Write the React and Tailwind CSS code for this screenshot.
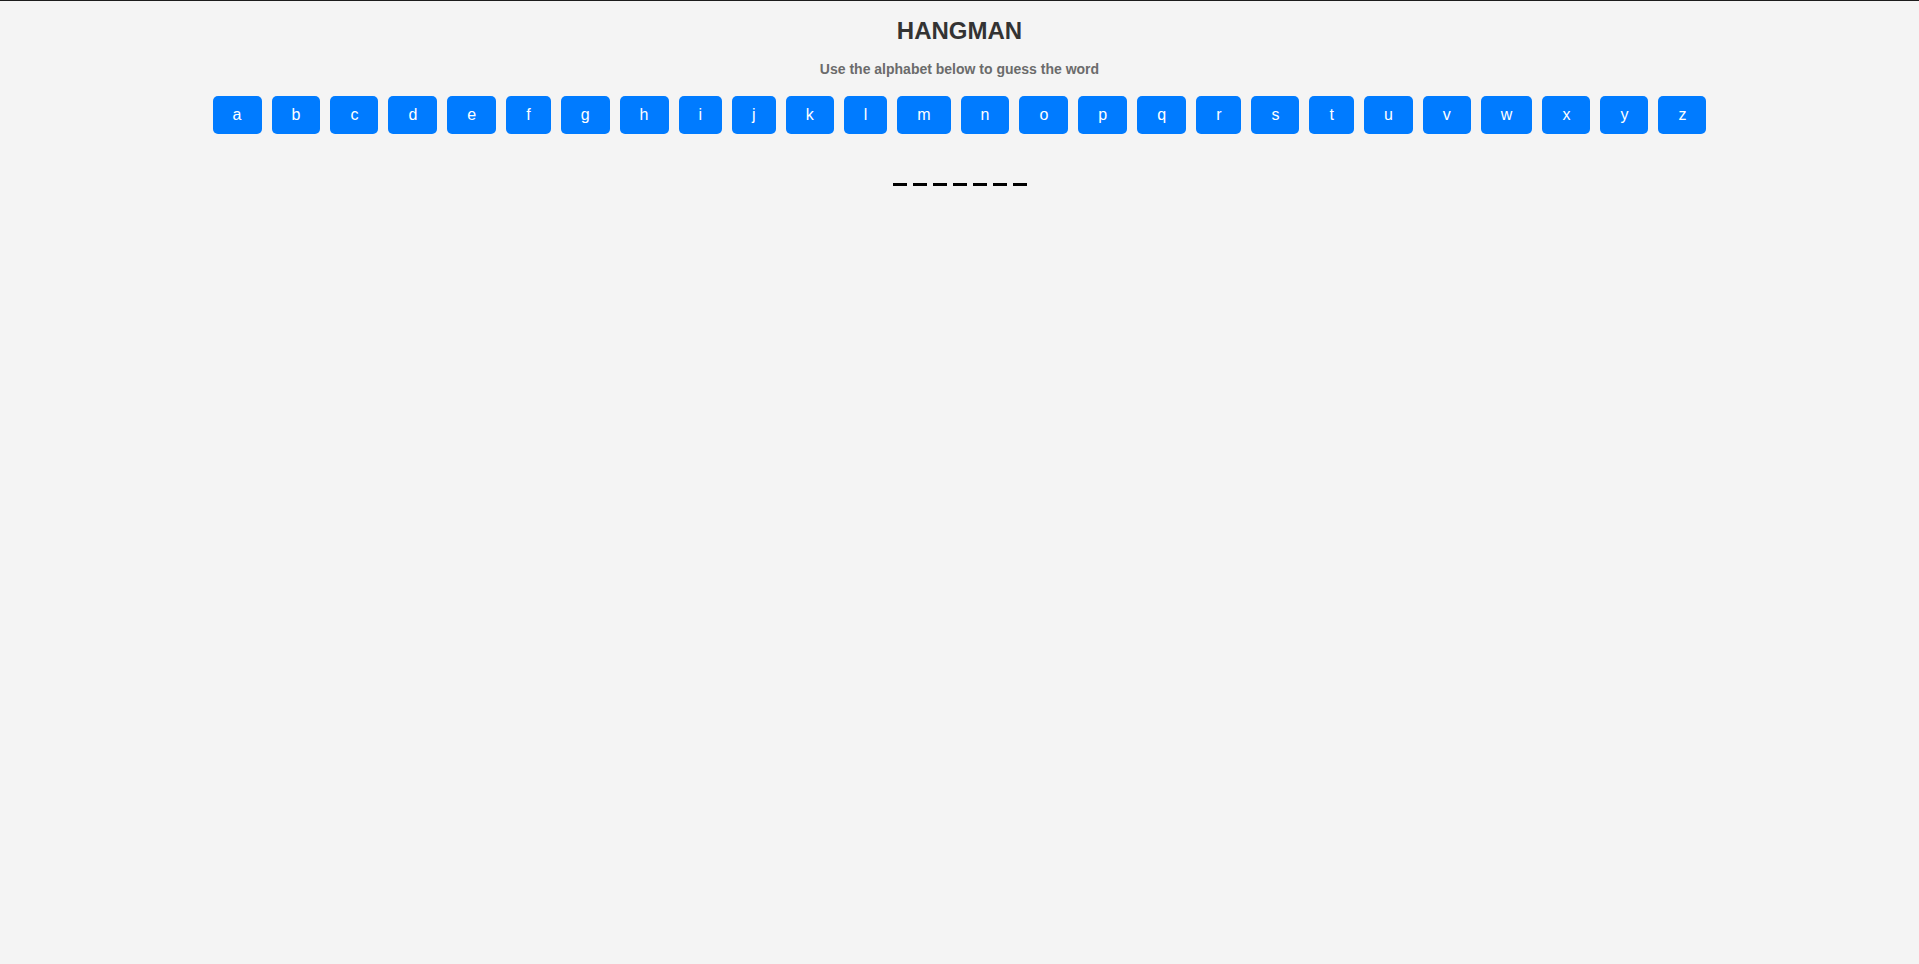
export default function App() {
  const letters = "abcdefghijklmnopqrstuvwxyz".split("");
  const word = 7;
  return (
    <div className="min-h-screen bg-[#f4f4f4] border-t border-[#1c1c1c] text-center font-['Liberation_Sans',Arial,sans-serif]">
      <h1 className="text-[24px] font-bold text-[#333] mt-4 mb-4 leading-[normal]">HANGMAN</h1>
      <p className="text-[14px] font-bold text-[#6b6b6b] mt-4 mb-[14px] leading-[normal]">
        Use the alphabet below to guess the word
      </p>
      <div className="flex flex-wrap justify-center">
        {letters.map((l) => (
          <button
            key={l}
            className="m-[5px] px-5 py-[10px] bg-[#007bff] text-white text-[16px] leading-[18px] rounded-[5px] font-['Liberation_Sans',Arial,sans-serif]"
          >
            {l}
          </button>
        ))}
      </div>
      <div className="mt-[44px] flex justify-center gap-[6px]">
        {Array.from({ length: word }).map((_, i) => (
          <span key={i} className="block w-[14px] h-[3px] bg-black"></span>
        ))}
      </div>
    </div>
  );
}
